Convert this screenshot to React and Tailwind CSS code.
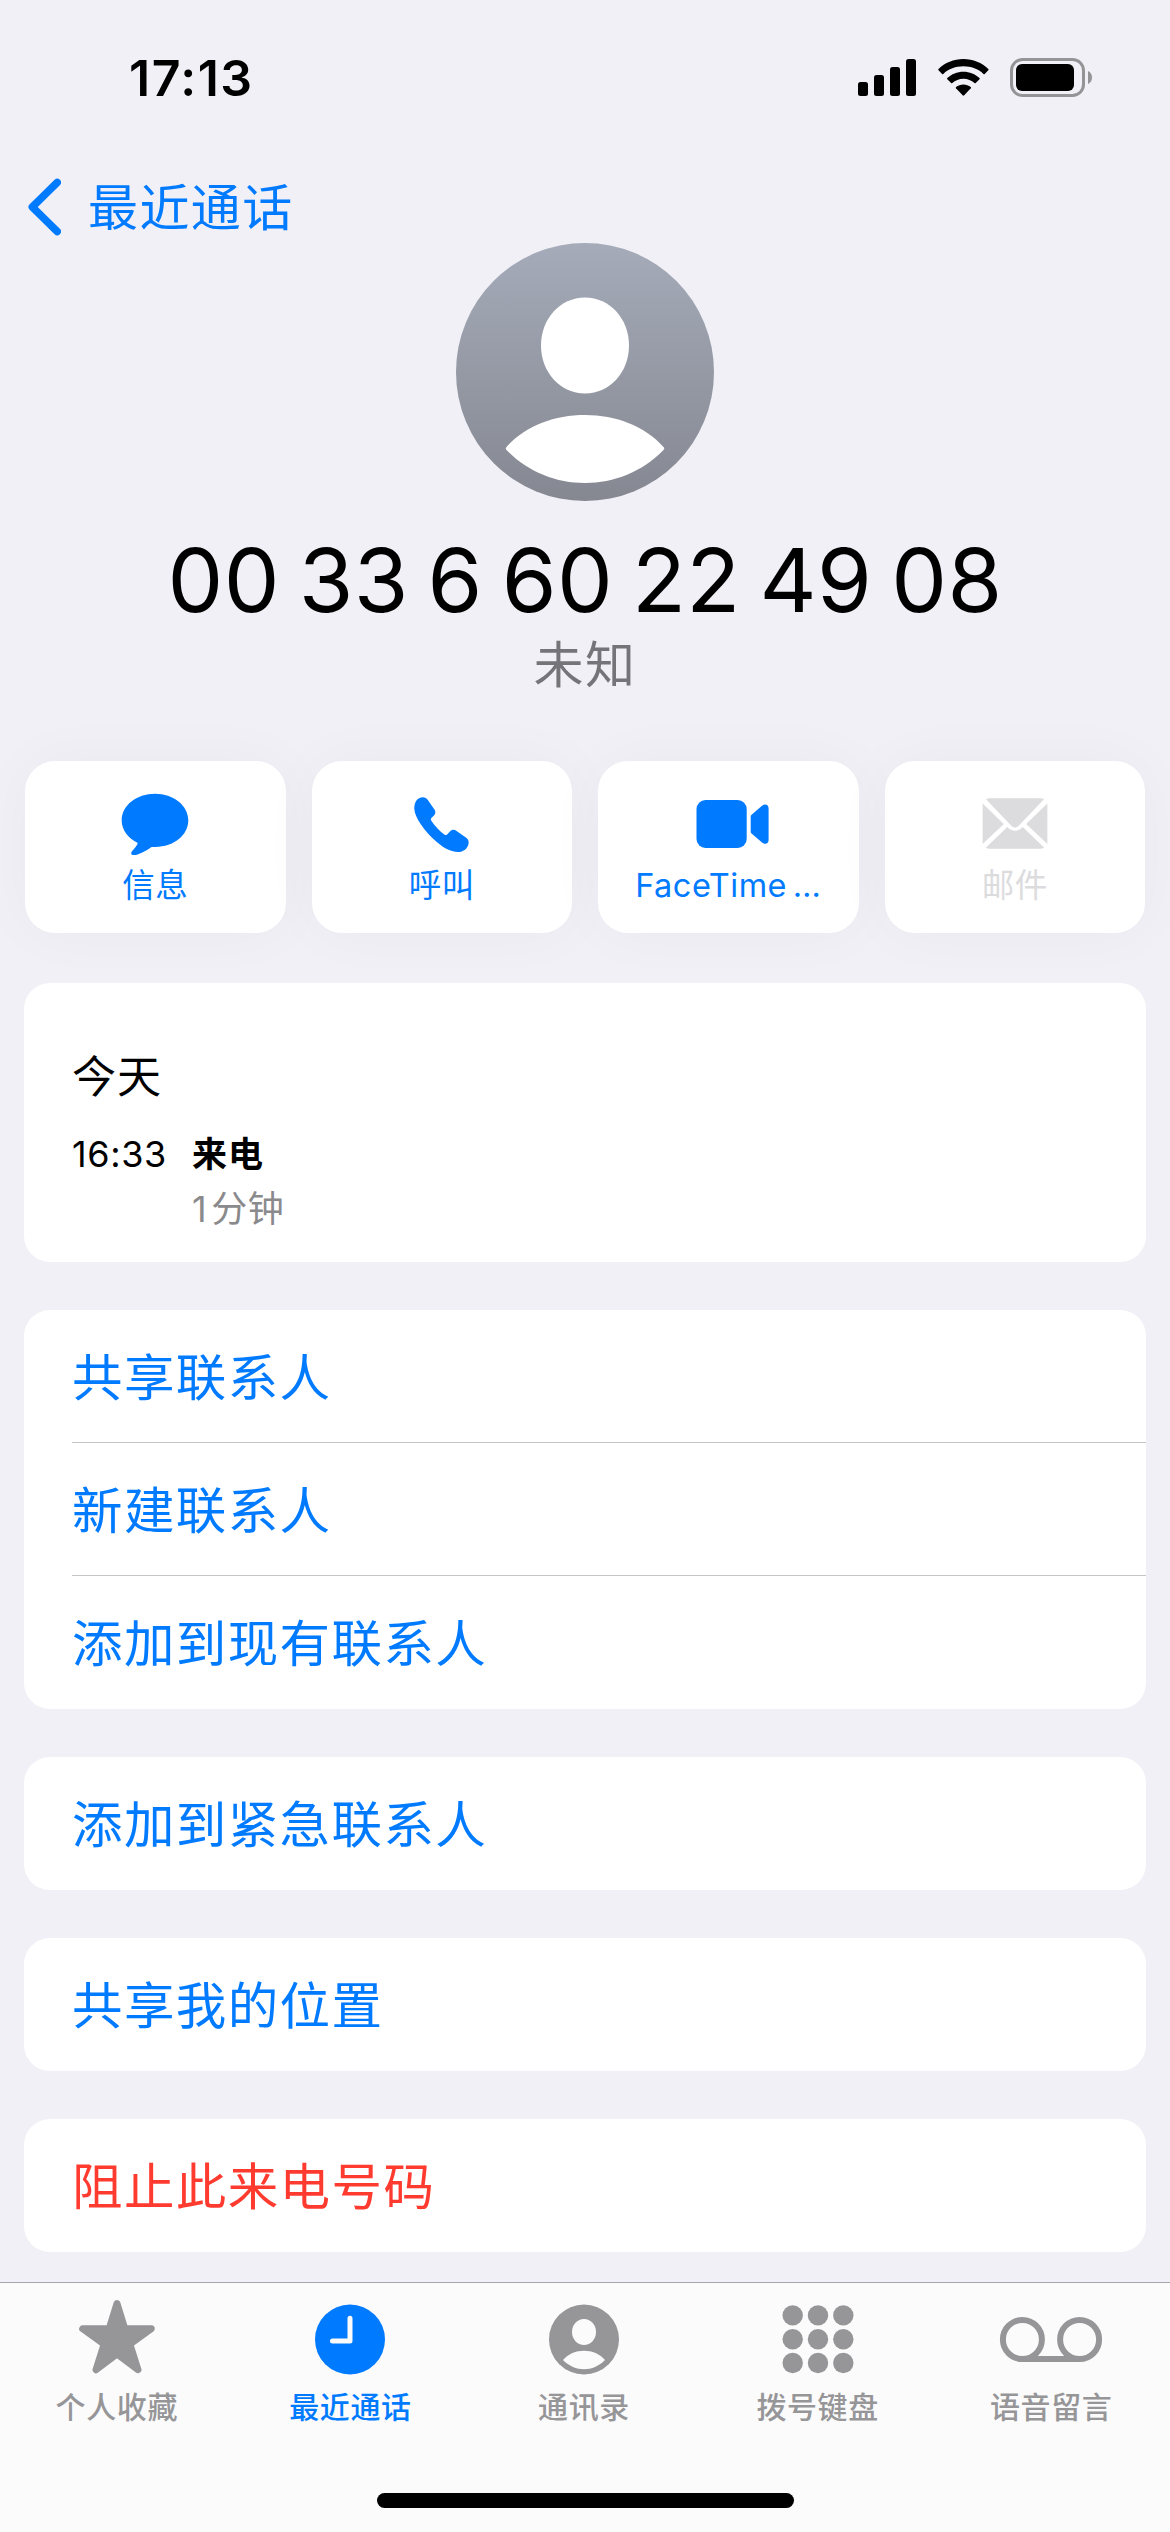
import React from 'react';

const BubbleIcon = () => (
    <svg className="w-[68px] h-[64px]" viewBox="0 0 68 64" fill="currentColor">
        <path d="M34 1.7C52.4 1.7 67.3 13.4 67.3 28.3C67.3 43 53 55 34 54.9L30.5 54.9C25 59 17.5 63 12.6 63C10.2 63 9.5 61.2 11 59.2C13.3 56.6 15.8 54 16.8 51C7 46.3 0.7 38.3 0.7 28.3C0.7 13.4 15.6 1.7 34 1.7Z" />
    </svg>
);

const PhoneIcon = () => (
    <svg className="w-[56px] h-[64px]" viewBox="0 0 56 64" fill="currentColor">
        <path d="M5.5 6C8.8 4.8 12 5.2 13.8 8L20.6 17.8C21.8 19.6 21.6 21.6 20.2 23.2L17.4 26C16.7 26.8 16.7 27.7 17.2 28.5C20.6 34 25.600 39.2 30.6 42.7C31.400 43.2 32.4 43.100 33.100 42.4L36 39.400C38 37.500 40.2 37.400 42.2 38.800L52.2 45.800C54.700 47.600 55.200 50.200 54.200 53.200C52.300 57.800 48.500 60 43.800 60C37.500 60 31 57 22.500 49.800C10.500 39.400 0.500 25.500 0.300 16.800C0.300 11.400 2 7.500 5.500 6Z" />
    </svg>
);

const VideoIcon = () => (
    <svg className="w-[73px] h-[64px] ml-[8px]" viewBox="0 0 73 64" fill="currentColor">
        <rect x="0.5" y="8" width="50.2" height="48" rx="9" />
        <path d="M54.7 24.5Q54.7 23.5 55.6 22.7L66 13.8C69.5 11.2 72.6 13 72.6 16.5V48C72.6 51.3 69.5 53 66 50.4L55.6 41.5Q54.7 40.7 54.7 39.7Z" />
    </svg>
);

const MailIcon = () => (
    <svg className="w-[66px] h-[64px]" viewBox="0 0 66 64" fill="currentColor">
        <path d="M4 7.2Q5.5 6.2 7.5 6.2H58.5Q60.5 6.2 62 7.2L36.2 34.2Q33 37 29.8 34.2Z" />
        <path d="M0.6 11.5L21.8 32L0.6 52Z" />
        <path d="M65.4 11.5L44.2 32L65.4 52Z" />
        <path d="M3.8 55.8L25.3 34.9C30 40 36 40 40.7 34.9L62.2 55.8Q60.5 56.8 58.5 56.8H7.5Q5.5 56.8 3.8 55.8Z" />
    </svg>
);

const StarIcon = () => (
    <svg className="w-[78px] h-[76px]" viewBox="0 0 78 76" fill="currentColor" stroke="currentColor" strokeWidth="7" strokeLinejoin="round">
        <path d="M39 4.6L46.8 29.7H73.3L51.9 45.2L60 70.7L39 55L18 70.7L26.1 45.2L4.7 29.7H31.2Z" />
    </svg>
);

const ClockIcon = () => (
    <svg className="w-[78px] h-[76px]" viewBox="0 0 78 76">
        <circle cx="39" cy="40.5" r="35" fill="currentColor" />
        <path d="M39 19.3V42H21.5" fill="none" stroke="#fbfbfc" strokeWidth="5" strokeLinecap="round" strokeLinejoin="round" />
    </svg>
);

const ContactIcon = () => (
    <svg className="w-[78px] h-[76px]" viewBox="0 0 78 76">
        <circle cx="39" cy="40.5" r="35" fill="currentColor" />
        <ellipse cx="39" cy="33" rx="12" ry="13" fill="#fbfbfc" />
        <path d="M18 61C28 48.5 50 48.5 60 61C48 73.3 30 73.3 18 61Z" fill="#fbfbfc" />
    </svg>
);

const KeypadIcon = () => (
    <svg className="w-[78px] h-[76px]" viewBox="0 0 78 76" fill="currentColor">
        {[16.4, 40.2, 64].map((y) =>
            [13.7, 39, 64.3].map((x) => <circle key={`${x}-${y}`} cx={x} cy={y} r="10.2" />)
        )}
    </svg>
);

const VoicemailIcon = () => (
    <svg className="w-[104px] h-[76px]" viewBox="0 0 104 76" fill="none" stroke="currentColor" strokeWidth="6">
        <circle cx="23.4" cy="40.5" r="19.5" />
        <circle cx="80.6" cy="40.5" r="19.5" />
        <path d="M23.4 60H80.6" />
    </svg>
);

const actions = [
    { label: '信息', icon: <BubbleIcon /> },
    { label: '呼叫', icon: <PhoneIcon /> },
    { label: 'FaceTime …', icon: <VideoIcon /> },
    { label: '邮件', icon: <MailIcon />, disabled: true },
];

const groups = [
    { items: ['共享联系人', '新建联系人', '添加到现有联系人'] },
    { items: ['添加到紧急联系人'] },
    { items: ['共享我的位置'] },
    { items: ['阻止此来电号码'], danger: true },
];

const tabs = [
    { label: '个人收藏', icon: <StarIcon /> },
    { label: '最近通话', icon: <ClockIcon />, active: true },
    { label: '通讯录', icon: <ContactIcon /> },
    { label: '拨号键盘', icon: <KeypadIcon /> },
    { label: '语音留言', icon: <VoicemailIcon /> },
];

const StatusBar = () => (
    <div className="h-[170px] shrink-0 pl-[129px] pr-[77px] pt-[48px] flex items-start justify-between">
        <span className="text-[50px] leading-[60px] font-semibold tracking-[1.5px]">17:13</span>
        <div className="flex items-start pt-[10px]">
            <svg className="w-[58px] h-[39px]" viewBox="0 0 58 39">
                <rect x="0" y="24" width="10" height="14" rx="2.5" />
                <rect x="16" y="17" width="10" height="21" rx="2.5" />
                <rect x="32" y="9" width="10" height="29" rx="2.5" />
                <rect x="48" y="1" width="10" height="37" rx="2.5" />
            </svg>
            <svg className="w-[52px] h-[39px] ml-[21px]" viewBox="0 0 52 39">
                <path d="M26.4 1C36 1 45 4.8 51.3 11Q51.9 11.6 51.3 12.3L47.7 16Q47.1 16.5 46.5 15.9C41.2 11 34 8.3 26.4 8.3C18.8 8.3 11.6 11 6.3 15.9Q5.7 16.5 5.1 16L1.5 12.3Q0.9 11.6 1.5 11C7.8 4.8 16.8 1 26.4 1Z" />
                <path d="M26.4 13.7C32.6 13.7 38.3 16 42.5 20Q43.1 20.6 42.5 21.2L38.7 25Q38.1 25.5 37.5 25C34.5 22.4 30.7 20.8 26.4 20.8C22.1 20.8 18.3 22.4 15.3 25Q14.7 25.5 14.1 25L10.3 21.2Q9.7 20.6 10.3 20C14.5 16 20.2 13.7 26.4 13.7Z" />
                <path d="M26.4 26.4C29.2 26.4 31.8 27.4 33.7 29Q34.4 29.6 33.8 30.3L27.2 37.3Q26.4 38 25.6 37.3L19 30.3Q18.4 29.6 19.1 29C21 27.4 23.6 26.4 26.4 26.4Z" />
            </svg>
            <svg className="w-[83px] h-[39px] ml-[21px]" viewBox="0 0 83 39">
                <rect x="1.5" y="1.5" width="72" height="36" rx="11" fill="none" stroke="#949497" strokeWidth="3" />
                <rect x="6" y="6" width="58" height="27" rx="6" />
                <path d="M78 13C80.5 14 82 16.5 82 19.5C82 22.5 80.5 25 78 26Z" fill="#949497" />
            </svg>
        </div>
    </div>
);

const App = () => {
    return (
        <div className="w-[1170px] h-[2532px] overflow-hidden flex flex-col bg-[#f1f0f6] text-black [font-family:Inter,'Noto_Sans_CJK_SC',sans-serif]">
            <StatusBar />

            {/* Back button */}
            <div className="h-[73px] shrink-0 pl-[28px] flex items-center text-[#007aff]">
                <svg className="w-[33px] h-[58px]" viewBox="0 0 33 58" fill="none" stroke="currentColor" strokeWidth="7.5" strokeLinecap="round" strokeLinejoin="round">
                    <path d="M29.2 4.5L4.3 29L29.2 53.5" />
                </svg>
                <span className="ml-[27px] pt-[3px] text-[50px] leading-[60px] tracking-[1.4px]">最近通话</span>
            </div>

            {/* Avatar and number */}
            <div className="shrink-0 flex flex-col items-center">
                <svg className="w-[258px] h-[258px]" viewBox="0 0 258 258">
                    <defs>
                        <linearGradient id="avatarFill" x1="0" y1="0" x2="0" y2="1">
                            <stop offset="0" stopColor="#a5abb9" />
                            <stop offset="1" stopColor="#858891" />
                        </linearGradient>
                    </defs>
                    <circle cx="129" cy="129" r="129" fill="url(#avatarFill)" />
                    <path d="M129 54.5C154 54.5 173 76 173 102.5C173 129 154 150.5 129 150.5C104 150.5 85 129 85 102.5C85 76 104 54.5 129 54.5Z" fill="#fff" />
                    <path d="M50.5 204C69 183 98 172 129 172C160 172 189 183 207.5 204Q209 205.5 207.5 207C186 229 158 240 129 240C100 240 72 229 50.5 207Q49 205.5 50.5 204Z" fill="#fff" />
                </svg>
                <h1 className="mt-[24px] h-[109px] text-[88.5px] leading-[109px] tracking-[0.4px] [word-spacing:-6.5px] whitespace-nowrap">00 33 6 60 22 49 08</h1>
                <p className="mt-[1px] text-[50px] leading-[61px] tracking-[1.5px] text-[#757579]">未知</p>
            </div>

            {/* Quick actions */}
            <div className="shrink-0 mt-[65px] px-[25px] grid grid-cols-4 gap-[26px]">
                {actions.map((action) => (
                    <button
                        key={action.label}
                        className={`h-[172px] pt-[31px] flex flex-col items-center rounded-[30px] bg-white shadow-[0_0_60px_rgba(0,0,0,0.035)] ${
                            action.disabled ? 'text-[#dcdcde]' : 'text-[#007aff]'
                        }`}
                    >
                        {action.icon}
                        <span className="mt-[10px] text-[32.5px] leading-[40px] tracking-[0.5px] [word-spacing:-4px] whitespace-nowrap">{action.label}</span>
                    </button>
                ))}
            </div>

            {/* Call history */}
            <div className="shrink-0 mt-[50px] mx-[24px] h-[279px] pl-[48px] pt-[64px] rounded-[26px] bg-white">
                <h2 className="text-[44px] leading-[60px] tracking-[1px]">今天</h2>
                <div className="mt-[20px] flex leading-[55px] text-[36px]">
                    <span className="w-[120px] tracking-[0.6px]">16:33</span>
                    <div className="flex flex-col">
                        <span className="font-semibold text-[35px] tracking-[1px]">来电</span>
                        <span className="tracking-[0.5px] text-[#8a8a8d]"><span className="mr-[4px]">1</span>分钟</span>
                    </div>
                </div>
            </div>

            {groups.map((group) => (
                <div key={group.items[0]} className="shrink-0 mt-[48px] mx-[24px] pl-[48px] rounded-[26px] bg-white">
                    {group.items.map((item, i) => (
                        <div
                            key={item}
                            className={`h-[133px] pt-[3px] flex items-center text-[50.5px] tracking-[1.4px] ${
                                group.danger ? 'text-[#ff3b30]' : 'text-[#007aff]'
                            } ${i < group.items.length - 1 ? 'border-b border-[#c5c5c8]' : ''}`}
                        >
                            {item}
                        </div>
                    ))}
                </div>
            ))}

            {/* Tab bar */}
            <div className="mt-auto h-[250px] shrink-0 flex flex-col items-center border-t border-[#a8a8ac] bg-[#fbfbfc]">
                <div className="w-full pr-[2px] pt-[16px] grid grid-cols-5">
                    {tabs.map((tab) => (
                        <div
                            key={tab.label}
                            className={`flex flex-col items-center ${tab.active ? 'text-[#007aff]' : 'text-[#969698]'}`}
                        >
                            {tab.icon}
                            <span className="mt-[12px] text-[30px] leading-[40px] font-medium tracking-[0.6px]">{tab.label}</span>
                        </div>
                    ))}
                </div>
                <div className="mt-[66px] w-[417px] h-[15px] rounded-full bg-black"></div>
            </div>
        </div>
    );
};

export default App;
